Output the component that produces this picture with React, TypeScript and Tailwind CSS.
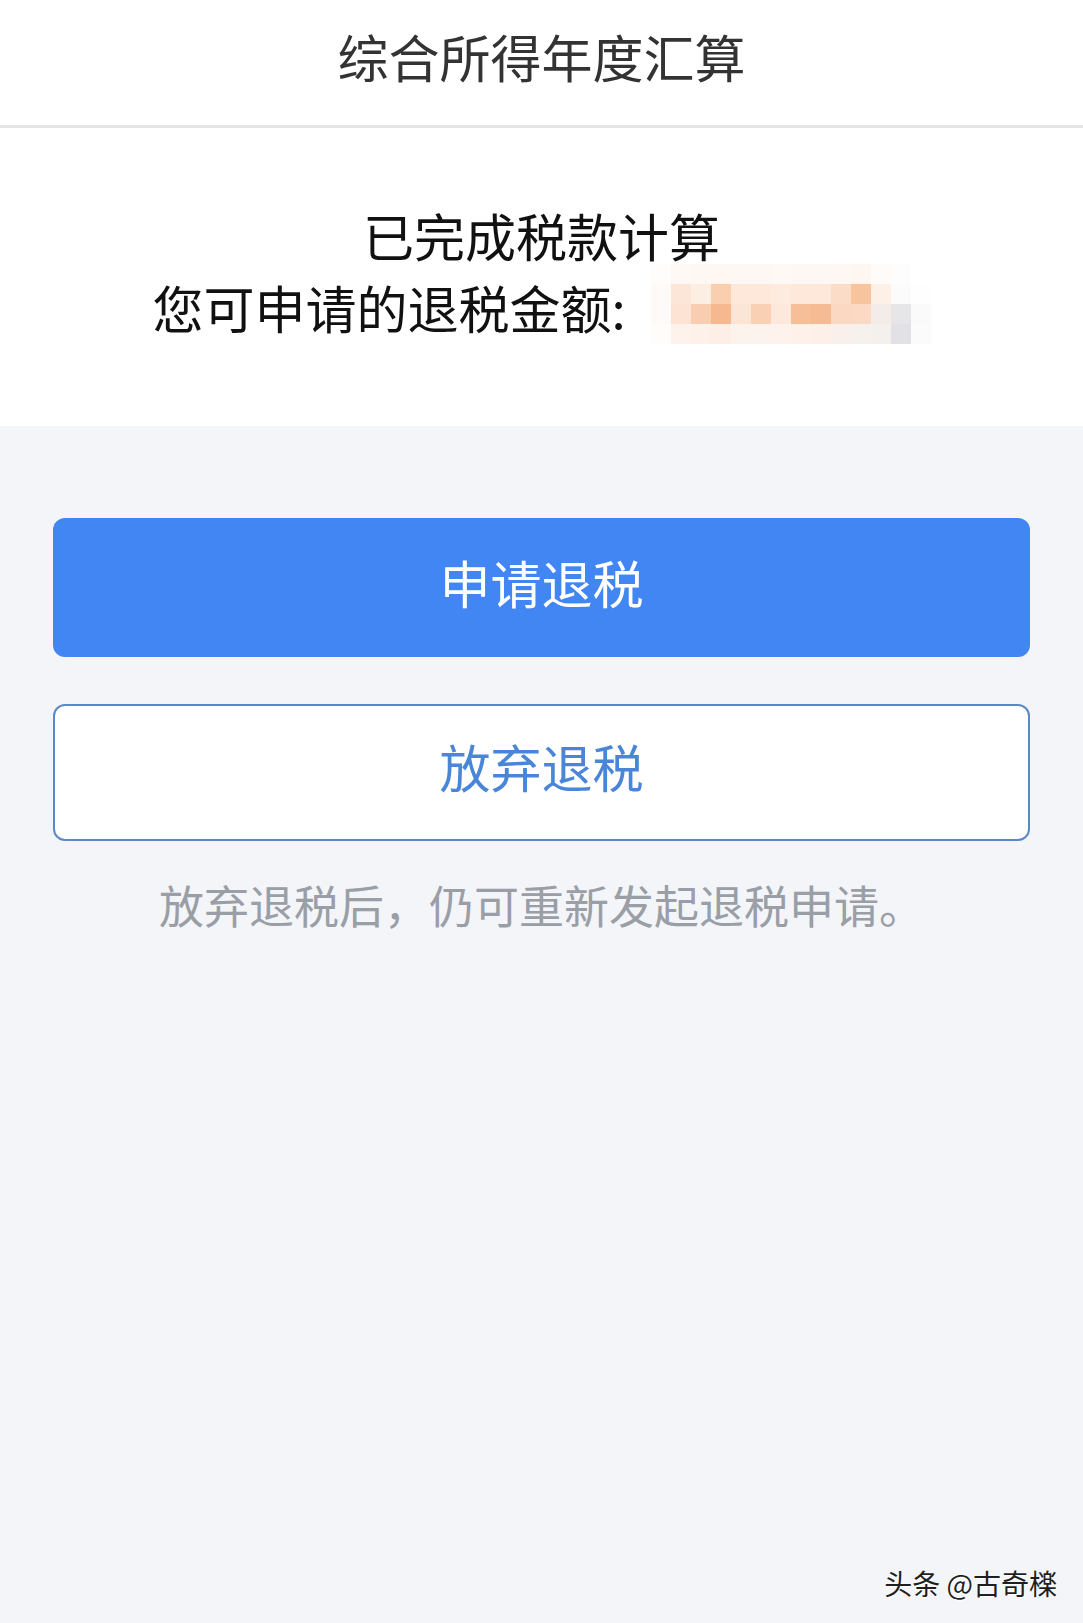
import React from "react";

const mosaic: string[][] = [
  ["#fffdfb", "#fef9f5", "#fef8f4", "#fef7f2", "#fef8f4", "#fef8f4", "#fef9f5", "#fef8f4", "#fef8f4", "#fef7f3", "#fef6f1", "#fefbf8", "#fdfdfd", "#ffffff"],
  ["#fefaf7", "#fce6d8", "#fdeee4", "#f9cfb0", "#fde8da", "#fde8da", "#fdebdf", "#fde8da", "#fde8da", "#fbdcc6", "#f8c49e", "#fdf0e7", "#fbfbfb", "#fefefe"],
  ["#fefaf7", "#fde3d3", "#f9cdb0", "#f6b88f", "#fde5d6", "#f9d0b3", "#fde9dc", "#f7bf98", "#f6bb93", "#fad8c1", "#fbd9c3", "#f3ece8", "#e6e6e8", "#fafafa"],
  ["#fffcfa", "#fdf3ec", "#fdf1e9", "#fdefe6", "#fdf3ed", "#fdf3ee", "#fdf2ec", "#fdf1ea", "#fdf0e8", "#faf0eb", "#f7f1ee", "#f4f0ee", "#e2e2e6", "#fbfbfb"],
];

function BlurredAmount() {
  return (
    <div className="flex flex-col mt-[-6px]">
      {mosaic.map((row, r) => (
        <div key={r} className="flex">
          {row.map((c, i) => (
            <div key={i} className="w-5 h-5" style={{ backgroundColor: c }} />
          ))}
        </div>
      ))}
    </div>
  );
}

export default function App() {
  return (
    <div
      className="min-h-screen flex flex-col bg-[#f3f5f9]"
      style={{ fontFamily: '"Noto Sans CJK SC", "Noto Sans", sans-serif' }}
    >
      <header className="h-[128px] bg-white border-b-[3px] border-[#e4e4e4] flex items-center justify-center">
        <h1 className="text-[51px] leading-none text-[#333333] font-normal -mt-[12px]">
          综合所得年度汇算
        </h1>
      </header>

      <section className="bg-white pt-[72px] pb-[82px] flex flex-col items-center text-[51px] leading-[70px] text-[#111111]">
        <div>已完成税款计算</div>
        <div className="flex items-center">
          <span>您可申请的退税金额:</span>
          <span className="ml-[25px]">
            <BlurredAmount />
          </span>
        </div>
      </section>

      <main className="flex-1 flex flex-col px-[53px] pt-[92px]">
        <button className="h-[139px] w-full rounded-[12px] bg-[#4286f3] text-white text-[51px] leading-none pb-[10px]">
          申请退税
        </button>
        <button className="mt-[47px] h-[137px] w-full rounded-[12px] bg-white border-2 border-[#5a89c6] text-[#4a86d8] text-[51px] leading-none pb-[12px]">
          放弃退税
        </button>
        <p className="mt-[36px] text-center text-[45px] leading-[56px] text-[#9a9ea6]">
          放弃退税后，仍可重新发起退税申请。
        </p>

        <div className="mt-auto self-end mr-[-27px] mb-[22px] text-[28px] leading-[36px] text-[#1f1f1f] [text-shadow:0_0_2px_#ffffff,1px_1px_1px_#ffffff]">
          头条 @古奇檪
        </div>
      </main>
    </div>
  );
}
